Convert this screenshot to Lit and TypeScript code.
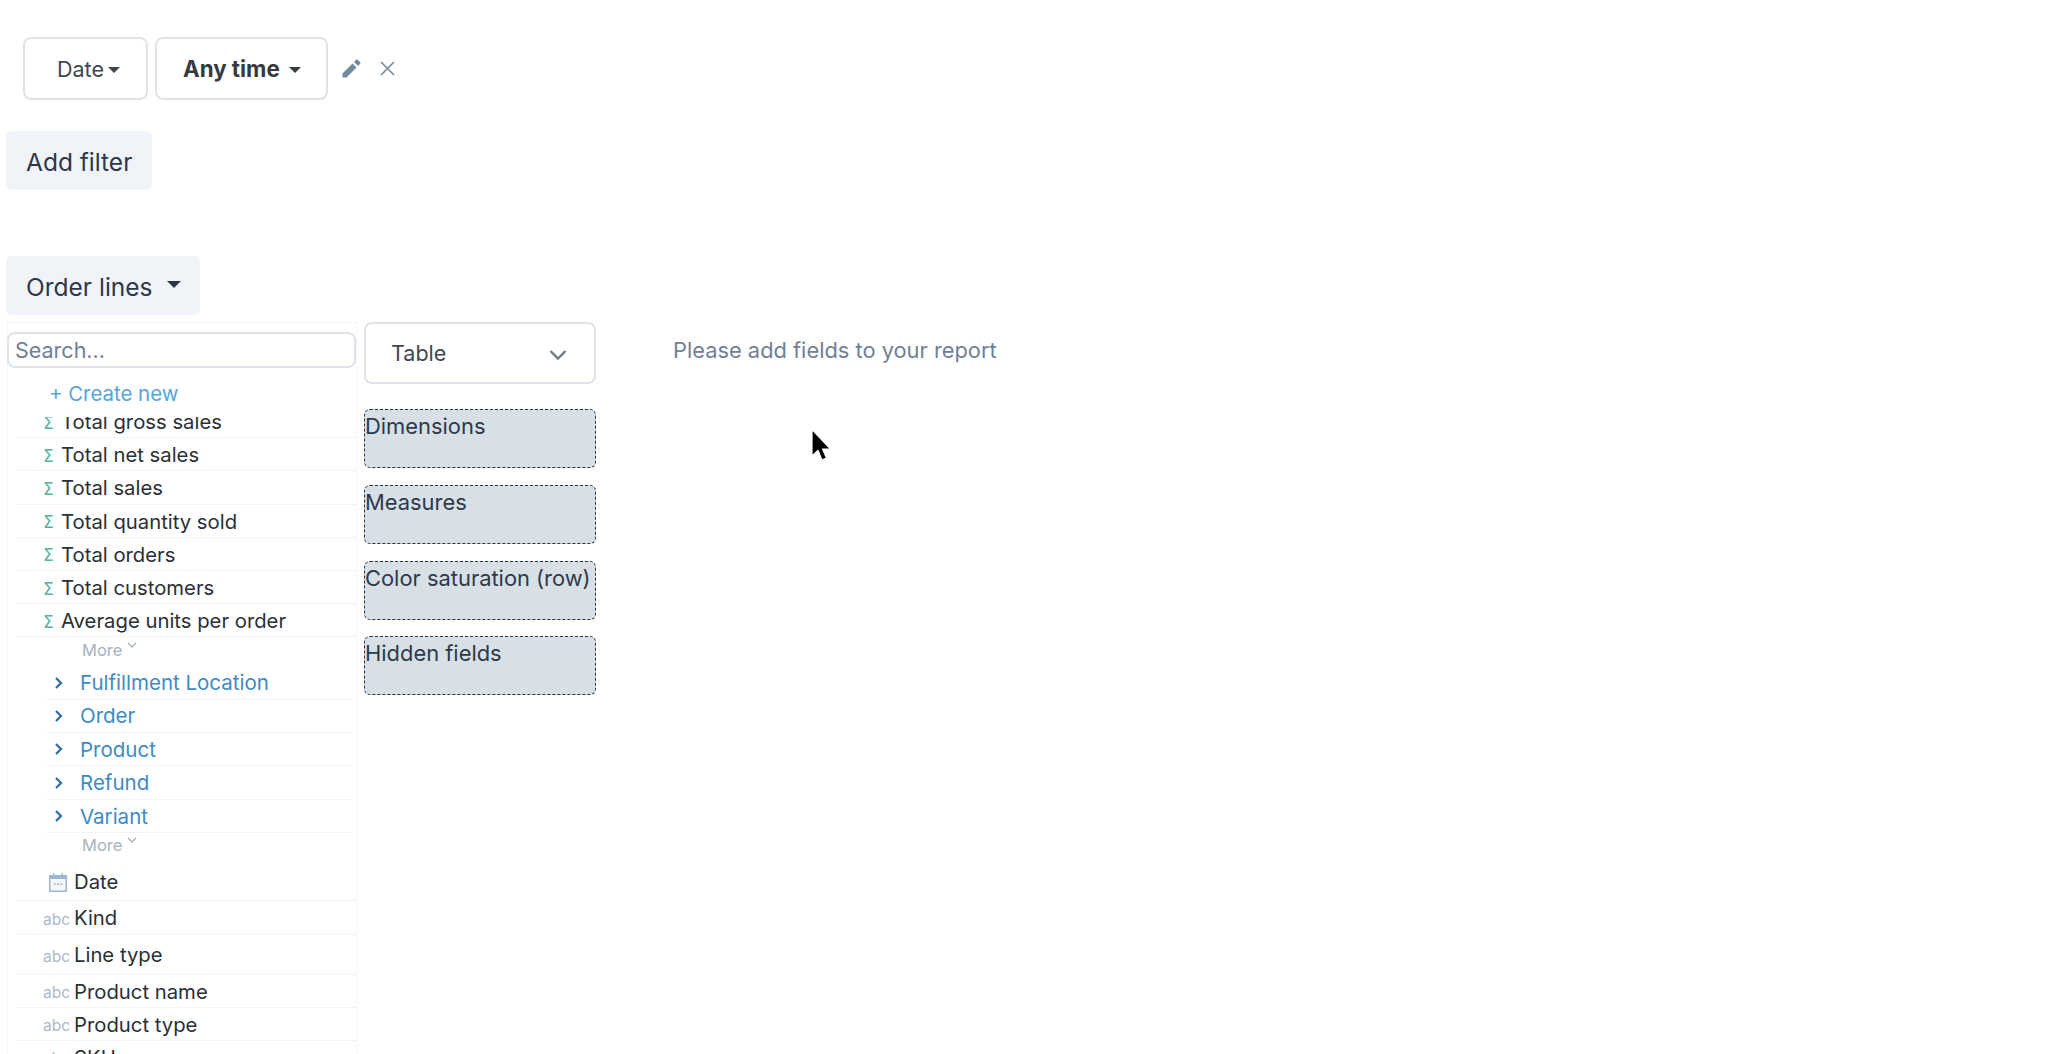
import { LitElement, html, css } from "lit";
import { customElement } from "lit/decorators.js";

const measures = ["Total gross sales", "Total net sales", "Total sales", "Total quantity sold", "Total orders", "Total customers", "Average units per order"];
const folders = ["Fulfillment Location", "Order", "Product", "Refund", "Variant"];
const fields: [string, number][] = [["Kind", 34], ["Line type", 40], ["Product name", 33], ["Product type", 33], ["SKU", 33]];

@customElement("app-root")
export class AppRoot extends LitElement {
  static styles = css`
    :host { display: block; height: 1054px; overflow: hidden; position: relative; background: #fff; font-family: Inter, "Liberation Sans", sans-serif; color: #2d3748; padding: 37px 0 0 6px; box-sizing: border-box; }
    * { box-sizing: border-box; }
    .filter { display: flex; align-items: center; margin-left: 17px; height: 63px; }
    .fbtn { height: 63px; border: 2px solid #dfe3e6; border-radius: 8px; background: #fff; display: flex; align-items: center; font-size: 21.5px; color: #3f474f; }
    .date { width: 125px; padding-left: 32px; }
    .any { width: 173px; margin-left: 7px; padding-left: 26px; font-weight: 700; font-size: 22.3px; color: #343a40; }
    .caret { display: inline-block; width: 0; height: 0; border-left: 6px solid transparent; border-right: 6px solid transparent; border-top: 6px solid currentColor; }
    .date .caret { margin-left: 4px; margin-top: 2px; }
    .any .caret { margin-left: 9px; margin-top: 2px; }
    .pencil { margin-left: 14px; width: 19px; height: 19px; }
    .close { margin-left: 19px; width: 15px; height: 15px; }
    .tbtn { height: 59px; background: #f0f4f8; border-radius: 6px; display: flex; align-items: center; padding: 2px 0 0 20px; font-size: 24.5px; color: #2d3748; }
    .add { width: 146px; margin-top: 31px; }
    .order { width: 194px; margin-top: 66px; }
    .order .caret { margin-left: 14px; margin-top: -4px; border-left-width: 7px; border-right-width: 7px; border-top-width: 7px; color: #2d3748; }
    .main { display: flex; margin-top: 7px; }
    .left { width: 350px; height: 732px; margin-left: 1px; border: 1px solid #f2f4f6; border-bottom: 0; padding-top: 9px; display: flex; flex-direction: column; }
    .search { height: 36px; width: 349px; margin-left: -1px; border: 2px solid #dde3e8; border-radius: 8px; font-size: 21.5px; color: #718096; display: flex; align-items: center; padding-left: 6px; }
    .create { height: 49px; padding: 12px 0 0 41px; font-size: 20.4px; line-height: 27px; color: #56a5dc; }
    .scroll { flex: 1; min-height: 0; overflow: hidden; }
    .inner { margin-top: -12px; padding-left: 8px; }
    .row { display: flex; align-items: center; height: 33.2px; padding-top: 1px; border-bottom: 1px solid #f1f3f5; font-size: 20.3px; color: #2b2f36; }
    .sigma { flex: none; width: 45px; padding: 2px 0 0 27px; font-size: 17px; color: #56b3a3; font-family: "DejaVu Sans", sans-serif; }
    .more { font-size: 16.5px; color: #a8b2bd; padding-left: 66px; display: flex; align-items: flex-start; }
    .more svg { margin: 2px 0 0 5px; }
    .m1 { height: 29px; padding-top: 3px; }
    .m2 { height: 32px; padding-top: 2px; }
    .folder { margin: 0 4px 0 30px; height: 33.4px; padding-top: 0; color: #3d8bc5; font-size: 20.5px; }
    .folder svg { margin-left: 8px; margin-right: 16px; flex: none; }
    .abc { flex: none; padding: 3px 0 0 27px; width: 58px; font-size: 15.5px; color: #a9b9c9; }
    .cal { flex: none; margin-left: 33px; margin-right: 7px; }
    .date-row { padding: 0 0 2px; }
    .field { padding-top: 0; }
    .mid { width: 232px; margin-left: 7px; }
    .select { height: 62px; border: 2px solid #dde3e8; border-radius: 8px; display: flex; align-items: center; justify-content: space-between; padding: 0 27px 0 25px; font-size: 21.5px; color: #3f474f; }
    .select svg { margin-top: 3px; }
    .zone { margin-top: 25px; height: 59px; background: #d8dfe5; border: 1px dashed #2a3440; border-radius: 6px; font-size: 21.9px; line-height: 26px; padding-top: 3px; color: #2d3a4a; white-space: nowrap; }
    .zone + .zone { margin-top: 17px; }
    .zone:last-child { margin-top: 16px; }
    .msg { margin: 15px 0 0 77px; font-size: 21.85px; line-height: 26px; color: #718096; white-space: nowrap; height: 26px; }
    .cursor { position: absolute; left: 810px; top: 428px; width: 22px; height: 34px; }
  `;

  private chevron() {
    return html`<svg width="10" height="14" viewBox="0 0 10 14" fill="none" stroke="#2f6d9e" stroke-width="2.2"><path d="M2 2l5 5-5 5" /></svg>`;
  }
  private mini() {
    return html`<svg width="10" height="7" viewBox="0 0 10 7" fill="none" stroke="#a8b2bd" stroke-width="1.3"><path d="M1 1l4 4 4-4" /></svg>`;
  }

  render() {
    return html`
      <div class="filter">
        <div class="fbtn date">Date<span class="caret"></span></div>
        <div class="fbtn any">Any time<span class="caret"></span></div>
        <svg class="pencil" viewBox="0 0 19 19"><path fill="#718a9e" d="M0.5 14.5v4h4L14.5 8.5l-4-4zM16 7l2.2-2.2a1.2 1.2 0 0 0 0-1.6L15.8.8a1.2 1.2 0 0 0-1.6 0L12 3z"/></svg>
        <svg class="close" viewBox="0 0 15 15" fill="none" stroke="#718a9e" stroke-width="1.6"><path d="M1 1l13 13M14 1L1 14"/></svg>
      </div>
      <div class="tbtn add">Add filter</div>
      <div class="tbtn order">Order lines<span class="caret"></span></div>
      <div class="main">
        <div class="left">
          <div class="search">Search...</div>
          <div class="create">+ Create new</div>
          <div class="scroll"><div class="inner">
            ${measures.map((m) => html`<div class="row"><span class="sigma">Σ</span><span>${m}</span></div>`)}
            <div class="more m1">More${this.mini()}</div>
            ${folders.map((f) => html`<div class="row folder">${this.chevron()}<span>${f}</span></div>`)}
            <div class="more m2">More${this.mini()}</div>
            <div class="row date-row" style="height:36px">
              <svg class="cal" width="18" height="20" viewBox="0 0 18 20"><path fill="#9db6cf" d="M1 3h3V1h1.500v2h7V1H14v2h3a1 1 0 0 1 1 1v15a1 1 0 0 1-1 1H1a1 1 0 0 1-1-1V4a1 1 0 0 1 1-1z"/><rect x="1.500" y="7" width="15" height="11.500" fill="#f5f8fb"/><path fill="#8ea6bd" d="M5 11.500h1.500V13H5zM8.300 11.500h1.500V13H8.300zM11.600 11.500h1.500V13h-1.500z"/></svg>
              <span>Date</span>
            </div>
            ${fields.map(([f, h]) => html`<div class="row field" style="height:${h}px"><span class="abc">abc</span><span>${f}</span></div>`)}
          </div></div>
        </div>
        <div class="mid">
          <div class="select">Table<svg width="18" height="12" viewBox="0 0 18 12" fill="none" stroke="#6f7a85" stroke-width="2.400"><path d="M1.500 2l7.500 7.500L16.500 2"/></svg></div>
          <div class="zone">Dimensions</div>
          <div class="zone">Measures</div>
          <div class="zone">Color saturation (row)</div>
          <div class="zone">Hidden fields</div>
        </div>
        <div class="msg">Please add fields to your report</div>
      </div>
      <svg class="cursor" viewBox="0 0 22 34"><path d="M2 1.500V28L8 22.500 12 32 16.500 30 12.500 21H20.500Z" fill="#000" stroke="#fff" stroke-width="1.200" stroke-linejoin="round"/></svg>
    `;
  }
}
